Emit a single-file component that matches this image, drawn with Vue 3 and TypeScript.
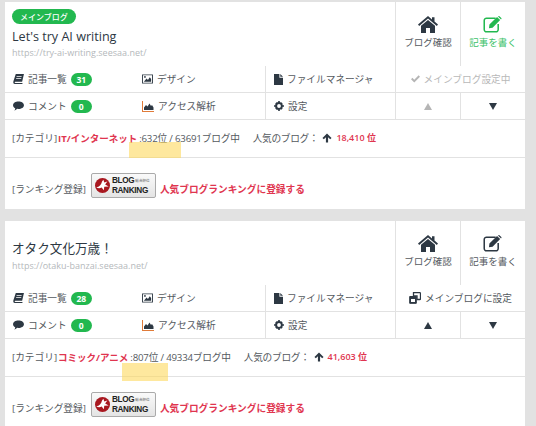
<script setup lang="ts">
interface Blog {
  main: boolean; title: string; url: string; posts: number; comments: number;
  category: string; rank: string; total: string; popular: string;
  mark: { left: string; top: string; width: string; height: string };
}
const blogs: Blog[] = [
  { main: true, title: "Let's try AI writing", url: 'https://try-ai-writing.seesaa.net/', posts: 31, comments: 0,
    category: 'IT/インターネット', rank: '632', total: '63691', popular: '18,410',
    mark: { left: '124px', top: '140px', width: '52px', height: '16px' } },
  { main: false, title: 'オタク文化万歳！', url: 'https://otaku-banzai.seesaa.net/', posts: 28, comments: 0,
    category: 'コミック/アニメ', rank: '807', total: '49334', popular: '41,603',
    mark: { left: '117px', top: '142px', width: '46px', height: '18px' } },
]
</script>

<template>
  <main class="page">
    <section v-for="b in blogs" :key="b.url" class="card">
      <div class="top">
        <div class="info" :class="{ nobadge: !b.main }">
          <span v-if="b.main" class="pill">メインブログ</span>
          <h2>{{ b.title }}</h2>
          <p class="url">{{ b.url }}</p>
        </div>
        <a class="action">
          <svg width="20" height="17" viewBox="0 0 20 17"><path d="M10 0 L14 3.4 V1.2 H16.5 V5.5 L20 8.6 L18.8 10 L10 2.6 L1.2 10 L0 8.6 Z M10 4 L17 9.8 V17 H12 V12 H8 V17 H3 V9.8 Z" fill="#2d3843"/></svg>
          <span>ブログ確認</span>
        </a>
        <a class="action" :class="{ green: b.main }">
          <svg width="22" height="17" viewBox="0 0 22 19"><path d="M14 2.5 H4 A2.5 2.5 0 0 0 1.2 5 V15 A2.5 2.5 0 0 0 4 17.7 H14 A2.5 2.5 0 0 0 16.8 15 V9" fill="none" stroke="currentColor" stroke-width="1.7"/><path d="M7 9.5 L15.5 1 L19 4.5 L10.5 13 L6.5 13.8 Z M16.5 0.5 L17.8 0 L20.6 2.6 L20 3.8 Z" fill="currentColor"/></svg>
          <span>記事を書く</span>
        </a>
      </div>

      <div class="row r1">
        <div class="cell c1">
          <svg class="ic" width="11" height="10" viewBox="0 0 12 11"><path d="M3 0 H12 L10 8.5 H2.5 C1.6 8.5 1.6 9.8 2.5 9.8 H10.5 L10.2 11 H2 C0.4 11 0 9.5 0.4 8 Z M4 2.4 H9.4 V3.4 H3.8 Z M3.5 4.6 H9 V5.6 H3.3 Z" fill="#2d3843" fill-rule="evenodd"/></svg>
          <span>記事一覧</span><b class="count">{{ b.posts }}</b>
        </div>
        <div class="cell c2">
          <svg class="ic" width="11" height="10" viewBox="0 0 12 11"><path d="M0 0.5 H12 V10.5 H0 Z M1 1.5 V9.5 H11 V1.5 Z" fill="#2d3843" fill-rule="evenodd"/><path d="M2 8.5 L5 5 L6.5 6.5 L8.5 3.5 L10 5.5 V8.5 Z" fill="#2d3843"/><circle cx="3.2" cy="3.2" r="1" fill="#2d3843"/></svg>
          <span>デザイン</span>
        </div>
        <div class="cell c3 bordered">
          <svg class="ic" width="9" height="11" viewBox="0 0 10 12"><path d="M0 0 H6 V4 H10 V12 H0 Z M7 0 L10 3 H7 Z" fill="#2d3843"/></svg>
          <span>ファイルマネージャ</span>
        </div>
        <div v-if="b.main" class="cell c4 center muted bordered">
          <svg class="ic" width="9" height="8" viewBox="0 0 11 9"><path d="M0 4.8 L1.7 3 L4 5.3 L9.3 0 L11 1.7 L4 8.7 Z" fill="#b5b5b5"/></svg>
          <span>メインブログ設定中</span>
        </div>
        <div v-else class="cell c4 center bordered">
          <svg class="ic" width="12" height="12" viewBox="0 0 12 12"><path d="M4.5 0.7 H10.8 A0.7 0.7 0 0 1 11.5 1.4 V6.8 A0.7 0.7 0 0 1 10.8 7.5 H8 V3.8 H4.5 Z" fill="none" stroke="#2d3843" stroke-width="1.3"/><path d="M0.7 4.5 H7.3 V11.3 H0.7 Z" fill="#2d3843" stroke="#2d3843"/><path d="M2 7 H6 V10 H2 Z" fill="#fff"/></svg>
          <span>メインブログに設定</span>
        </div>
      </div>

      <div class="row r2">
        <div class="cell c1">
          <svg class="ic" width="11" height="10" viewBox="0 0 12 11"><path d="M6 0.5 C9.3 0.5 12 2.2 12 4.6 C12 7 9.3 8.7 6 8.7 L4.6 8.6 C3.8 9.5 2.6 10.2 1.4 10.4 C2 9.6 2.4 8.9 2.4 8 C0.9 7.2 0 6 0 4.6 C0 2.2 2.7 0.5 6 0.5 Z" fill="#2d3843"/></svg>
          <span>コメント</span><b class="count zero">{{ b.comments }}</b>
        </div>
        <div class="cell c2">
          <svg class="ic" width="12" height="11" viewBox="0 0 12 11"><path d="M0 0 H1 V10 H12 V11 H0 Z" fill="#e07b39"/><path d="M2 9 V6.5 L4 4 L5.5 5.5 L7.5 2.5 L9 5 L10 4 L11.5 6.5 V9 Z" fill="#2d3843"/></svg>
          <span>アクセス解析</span>
        </div>
        <div class="cell c3 bordered">
          <svg class="ic" width="10" height="10" viewBox="0 0 11 11"><circle cx="5.5" cy="5.5" r="3.2" fill="none" stroke="#2d3843" stroke-width="2.2"/><path d="M4.6 0 H6.4 V2 H4.6 Z M4.6 9 H6.4 V11 H4.6 Z M0 4.6 H2 V6.4 H0 Z M9 4.6 H11 V6.4 H9 Z M1.5 2.8 L2.8 1.5 L4 2.8 L2.8 4 Z M7 8.2 L8.2 7 L9.5 8.2 L8.2 9.5 Z M8.2 1.5 L9.5 2.8 L8.2 4 L7 2.8 Z M2.8 7 L4 8.2 L2.8 9.5 L1.5 8.2 Z" fill="#2d3843"/></svg>
          <span>設定</span>
        </div>
        <div class="cell half bordered">
          <i class="tri up" :class="{ dim: b.main }"></i>
        </div>
        <div class="cell half bordered">
          <i class="tri down"></i>
        </div>
      </div>

      <div class="stats">
        <span class="lead">[カテゴリ]</span>
        <strong class="red cat">{{ b.category }}</strong>
        <span class="rank">:{{ b.rank }}位 / {{ b.total }}ブログ中</span>
        <span class="pop">人気のブログ：</span>
        <svg class="arrow" width="10" height="10" viewBox="0 0 11 11"><path d="M5.5 0.5 L10.5 5.5 L9 7 L6.7 4.8 V10.5 H4.3 V4.8 L2 7 L0.5 5.5 Z" fill="#2d3843"/></svg>
        <strong class="red num">{{ b.popular }} 位</strong>
      </div>

      <div class="reg">
        <span class="lead regtext">[ランキング登録]</span>
        <span class="logo">
          <svg width="15" height="15" viewBox="0 0 17 17"><circle cx="8.5" cy="8.5" r="8.5" fill="#a81820"/><path d="M1.5 10.5 C5 10 7 8 8 4 L9.5 2 L10.5 5 L14 4 L11.5 7.5 L15.5 9.5 L10.5 10 L10 14 L7.5 10.8 C5.5 11.8 3.5 11.8 1.5 10.5 Z" fill="#fff"/></svg>
          <span class="logotext">
            <span class="l1"><em>BLOG</em><small>総合順位</small></span>
            <em>RANKING</em>
          </span>
        </span>
        <strong class="red regtext">人気ブログランキングに登録する</strong>
      </div>

      <div class="mark" :style="b.mark"></div>
    </section>
  </main>
</template>

<style>
html, body { margin: 0; height: 426px; overflow: hidden; background: #e2e2e2; }
</style>

<style scoped>
.page {
  padding: 2px 11px 0 5px;
  font-family: "Open Sans", "Noto Sans CJK JP", sans-serif;
  font-size: 9.7px;
  color: #54595e;
}
.card {
  position: relative;
  background: #fff;
  margin-bottom: 12px;
  height: 207px;
  display: flex;
  flex-direction: column;
}
.card:last-child { height: 205px; }
.top { display: flex; height: 64px; }
.info { flex: 1; padding: 7px 0 0 7px; min-width: 0; }
.info.nobadge { padding-top: 15px; }
.pill {
  display: block;
  width: 64px;
  height: 15px;
  line-height: 15px;
  border-radius: 8px;
  background: #22b84f;
  color: #fff;
  font-size: 8px;
  font-weight: 500;
  text-align: center;
}
h2 {
  margin: 3px 0 0;
  font-size: 12.6px;
  font-weight: 400;
  line-height: 20px;
  color: #2d3843;
}
.url { margin: 0; font-size: 9px; line-height: 12px; color: #b4b8bb; }
.nobadge .url { margin-top: 1px; }
.action {
  width: 65px;
  box-sizing: border-box;
  border-left: 1px solid #e2e2e2;
  display: flex;
  flex-direction: column;
  align-items: center;
  padding-top: 14px;
  color: #2d3843;
  font-size: 9.5px;
}
.action span { margin-top: 3px; line-height: 14px; color: #54595e; }
.action.green { color: #22b84f; }
.action.green span { color: #3cc269; }
.row { display: flex; height: 26px; border-bottom: 1px solid #e2e2e2; }
.cell { display: flex; align-items: center; gap: 3px; box-sizing: border-box; white-space: nowrap; }
.bordered { border-left: 1px solid #e2e2e2; }
.c1 { width: 130px; padding-left: 8px; }
.c2 { width: 130px; padding-left: 7px; }
.c3 { width: 130px; padding-left: 8px; }
.c4 { width: 130px; }
.half { width: 65px; justify-content: center; }
.center { justify-content: center; }
.muted { color: #b8b8b8; }
.ic { flex: none; margin-right: 1px; }
.count {
  display: inline-block;
  margin-left: 1px;
  width: 21px;
  height: 13px;
  line-height: 13px;
  border-radius: 7px;
  background: #22b84f;
  color: #fff;
  font-size: 8.5px;
  font-weight: 700;
  text-align: center;
}
.tri { width: 0; height: 0; border-left: 4.5px solid transparent; border-right: 4.5px solid transparent; }
.tri.up { border-bottom: 7px solid #2d3843; }
.tri.up.dim { border-bottom-color: #b5b5b5; }
.tri.down { border-top: 7px solid #2d3843; }
.stats {
  height: 38px;
  box-sizing: border-box;
  border-bottom: 1px solid #e2e2e2;
  padding: 0 0 2px 7px;
  display: flex;
  align-items: center;
  white-space: nowrap;
}
.lead { margin-right: 1px; }
.red { color: #e0354f; font-weight: 700; }
.cat { font-size: 9.5px; }
.rank { margin-left: 2px; letter-spacing: -0.2px; }
.pop { margin: 0 2px 0 13px; letter-spacing: -0.3px; }
.arrow { margin: 0 4px 0 2px; }
.num { font-size: 9px; font-weight: 600; }
.reg { display: flex; align-items: flex-start; padding: 15px 0 0 7px; box-sizing: border-box; white-space: nowrap; }
.regtext { margin-top: 10px; line-height: 14px; }
.logo {
  display: flex;
  align-items: center;
  gap: 2px;
  width: 65px;
  height: 25px;
  margin: 0 4px 0 4px;
  padding-left: 3px;
  box-sizing: border-box;
  border: 1px solid #aaa;
  border-radius: 2px;
  background: linear-gradient(#fafafa, #e4e4e4);
}
.logotext {
  display: flex;
  flex-direction: column;
  font-family: "Liberation Sans", sans-serif;
  font-size: 8.2px;
  line-height: 9.6px;
  letter-spacing: -0.3px;
  font-weight: 700;
  color: #222;
}
.logotext em { font-style: normal; }
.l1 { display: flex; align-items: center; gap: 1px; }
.l1 small { font-family: "Noto Sans CJK JP", sans-serif; font-size: 3.6px; line-height: 5px; letter-spacing: 0; font-weight: 400; color: #555; }
.mark {
  position: absolute;
  background: #fdd85d;
  opacity: 0.6;
  pointer-events: none;
}
</style>
